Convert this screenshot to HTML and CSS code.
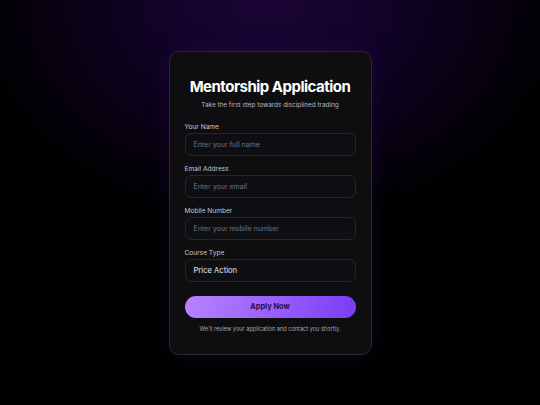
FILE: index.html
```html
<!DOCTYPE html>
<html lang="en">
<head>
<meta charset="utf-8">
<title>Mentorship Application</title>
<link rel="stylesheet" href="styles.css">
</head>
<body>
<main class="page">
  <form class="card">
    <h1 class="title">Mentorship Application</h1>
    <p class="subtitle">Take the first step towards disciplined trading</p>
    <div class="field">
      <label class="label">Your Name</label>
      <div class="input placeholder">Enter your full name</div>
    </div>
    <div class="field">
      <label class="label">Email Address</label>
      <div class="input placeholder">Enter your email</div>
    </div>
    <div class="field">
      <label class="label">Mobile Number</label>
      <div class="input placeholder">Enter your mobile number</div>
    </div>
    <div class="field">
      <label class="label">Course Type</label>
      <div class="input value">Price Action</div>
    </div>
    <button type="button" class="btn">Apply Now</button>
    <p class="note">We'll review your application and contact you shortly.</p>
  </form>
</main>
</body>
</html>
```

FILE: styles.css
```css
* { box-sizing: border-box; }
html, body { margin: 0; padding: 0; }
body {
  width: 540px;
  height: 405px;
  overflow: hidden;
  font-family: Inter, "Noto Sans", sans-serif;
  background:
    radial-gradient(ellipse 300px 230px at 270px 0px, #1c0536 0%, #12032a 35%, #070110 75%, #000000 100%),
    #000;
}
.page {
  height: 405px;
  display: flex;
  align-items: center;
  justify-content: center;
}
.card {
  width: 203px;
  height: 304px;
  margin: 0;
  padding: 25px 15px 0;
  background: #0e0e11;
  border: 1px solid #2c2736;
  border-radius: 10px;
  box-shadow: 0 0 24px rgba(80, 20, 140, 0.18);
  display: flex;
  flex-direction: column;
}
.title {
  margin: 0;
  font-size: 15px;
  line-height: 20px;
  font-weight: 700;
  color: #ffffff;
  text-align: center;
  letter-spacing: -0.5px;
  white-space: nowrap;
}
.subtitle {
  margin: 3px 0 0;
  font-size: 6.4px;
  line-height: 10px;
  color: #b9b6c0;
  text-align: center;
  white-space: nowrap;
}
.field {
  display: flex;
  flex-direction: column;
  margin-top: 12px;
}
.field + .field { margin-top: 8px; }
.label {
  font-size: 6.6px;
  line-height: 10px;
  color: #c9c6cf;
  margin-bottom: 1px;
}
.input {
  height: 23px;
  border: 1px solid #26252c;
  border-radius: 6px;
  background: #0f0f13;
  padding: 0 8px;
  display: flex;
  align-items: center;
  font-size: 7px;
}
.placeholder { color: #74727b; }
.value { color: #ececf0; font-size: 7.6px; }
.btn {
  margin-top: 14px;
  height: 22px;
  border: 0;
  border-radius: 11px;
  background: linear-gradient(100deg, #b683ff 0%, #9a61fb 50%, #7a3cf5 100%);
  color: #2a0c4e;
  font-family: Inter, "Noto Sans", sans-serif;
  font-size: 7.4px;
  font-weight: 700;
  padding: 0;
}
.note {
  margin: 7px 0 0;
  font-size: 5.6px;
  line-height: 8px;
  color: #a8a5b0;
  text-align: center;
  white-space: nowrap;
}
```
